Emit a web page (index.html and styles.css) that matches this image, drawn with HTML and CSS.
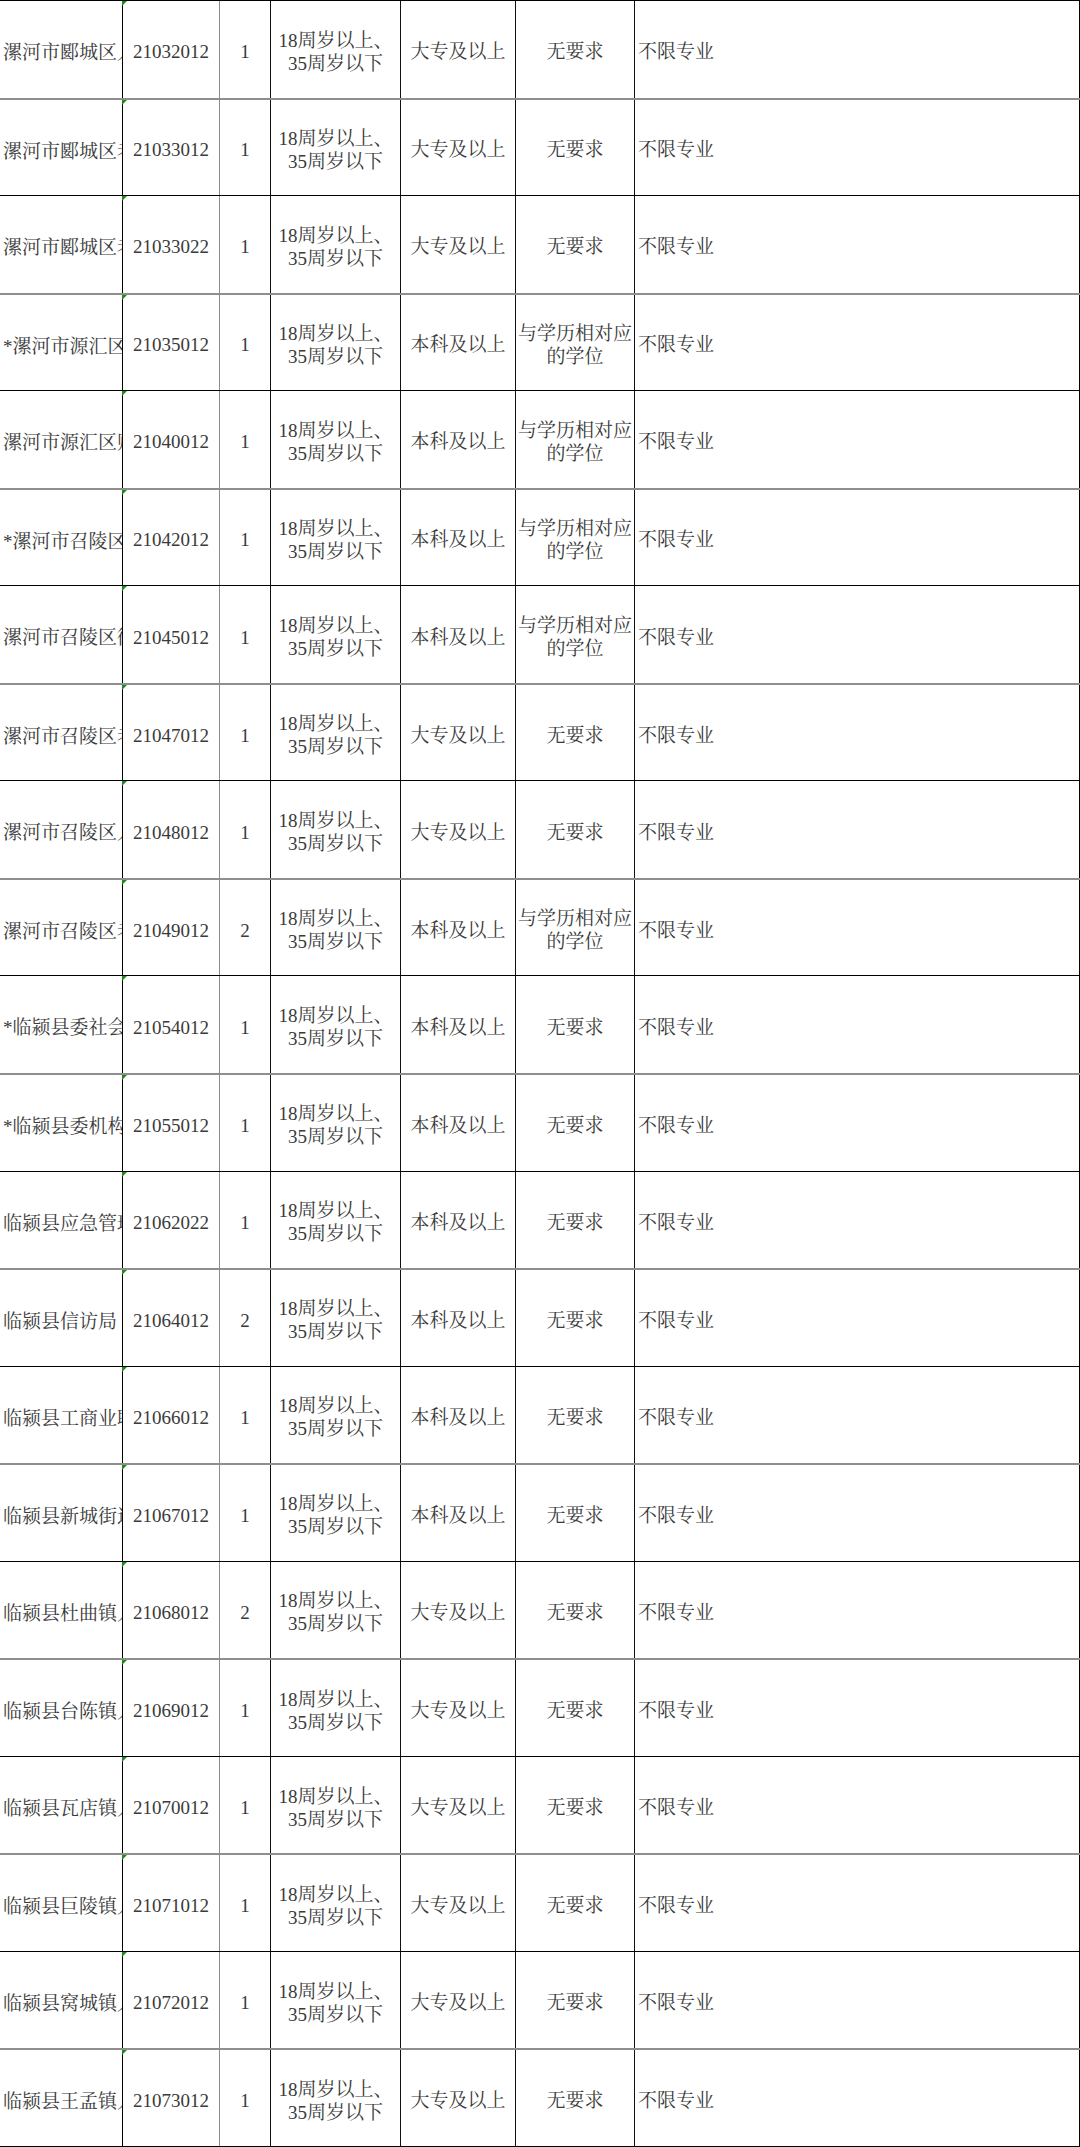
FILE: index.html
```html
<!DOCTYPE html>
<html lang="zh-CN">
<head>
<meta charset="utf-8">
<title>岗位表</title>
<link rel="stylesheet" href="styles.css">
</head>
<body>
<div class="sheet">
  <div class="row line-dark">
    <div class="c c1">漯河市郾城区人民政府</div><div class="c c2">21032012</div><div class="c c3">1</div>
    <div class="c c4">18周岁以上、<br>35周岁以下</div><div class="c c5">大专及以上</div><div class="c c6">无要求</div><div class="c c7">不限专业</div>
  </div>
  <div class="row line-gray">
    <div class="c c1">漯河市郾城区老干部局</div><div class="c c2">21033012</div><div class="c c3">1</div>
    <div class="c c4">18周岁以上、<br>35周岁以下</div><div class="c c5">大专及以上</div><div class="c c6">无要求</div><div class="c c7">不限专业</div>
  </div>
  <div class="row line-dark">
    <div class="c c1">漯河市郾城区老干部局</div><div class="c c2">21033022</div><div class="c c3">1</div>
    <div class="c c4">18周岁以上、<br>35周岁以下</div><div class="c c5">大专及以上</div><div class="c c6">无要求</div><div class="c c7">不限专业</div>
  </div>
  <div class="row line-gray">
    <div class="c c1">*漯河市源汇区委</div><div class="c c2">21035012</div><div class="c c3">1</div>
    <div class="c c4">18周岁以上、<br>35周岁以下</div><div class="c c5">本科及以上</div><div class="c c6">与学历相对应<br>的学位</div><div class="c c7">不限专业</div>
  </div>
  <div class="row line-dark">
    <div class="c c1">漯河市源汇区财政局</div><div class="c c2">21040012</div><div class="c c3">1</div>
    <div class="c c4">18周岁以上、<br>35周岁以下</div><div class="c c5">本科及以上</div><div class="c c6">与学历相对应<br>的学位</div><div class="c c7">不限专业</div>
  </div>
  <div class="row line-gray">
    <div class="c c1">*漯河市召陵区委</div><div class="c c2">21042012</div><div class="c c3">1</div>
    <div class="c c4">18周岁以上、<br>35周岁以下</div><div class="c c5">本科及以上</div><div class="c c6">与学历相对应<br>的学位</div><div class="c c7">不限专业</div>
  </div>
  <div class="row line-dark">
    <div class="c c1">漯河市召陵区街道办事处</div><div class="c c2">21045012</div><div class="c c3">1</div>
    <div class="c c4">18周岁以上、<br>35周岁以下</div><div class="c c5">本科及以上</div><div class="c c6">与学历相对应<br>的学位</div><div class="c c7">不限专业</div>
  </div>
  <div class="row line-gray">
    <div class="c c1">漯河市召陵区老干部局</div><div class="c c2">21047012</div><div class="c c3">1</div>
    <div class="c c4">18周岁以上、<br>35周岁以下</div><div class="c c5">大专及以上</div><div class="c c6">无要求</div><div class="c c7">不限专业</div>
  </div>
  <div class="row line-dark">
    <div class="c c1">漯河市召陵区人民政府</div><div class="c c2">21048012</div><div class="c c3">1</div>
    <div class="c c4">18周岁以上、<br>35周岁以下</div><div class="c c5">大专及以上</div><div class="c c6">无要求</div><div class="c c7">不限专业</div>
  </div>
  <div class="row line-gray">
    <div class="c c1">漯河市召陵区老干部局</div><div class="c c2">21049012</div><div class="c c3">2</div>
    <div class="c c4">18周岁以上、<br>35周岁以下</div><div class="c c5">本科及以上</div><div class="c c6">与学历相对应<br>的学位</div><div class="c c7">不限专业</div>
  </div>
  <div class="row line-dark">
    <div class="c c1">*临颍县委社会工作部</div><div class="c c2">21054012</div><div class="c c3">1</div>
    <div class="c c4">18周岁以上、<br>35周岁以下</div><div class="c c5">本科及以上</div><div class="c c6">无要求</div><div class="c c7">不限专业</div>
  </div>
  <div class="row line-gray">
    <div class="c c1">*临颍县委机构编制委员会</div><div class="c c2">21055012</div><div class="c c3">1</div>
    <div class="c c4">18周岁以上、<br>35周岁以下</div><div class="c c5">本科及以上</div><div class="c c6">无要求</div><div class="c c7">不限专业</div>
  </div>
  <div class="row line-dark">
    <div class="c c1">临颍县应急管理局</div><div class="c c2">21062022</div><div class="c c3">1</div>
    <div class="c c4">18周岁以上、<br>35周岁以下</div><div class="c c5">本科及以上</div><div class="c c6">无要求</div><div class="c c7">不限专业</div>
  </div>
  <div class="row line-gray">
    <div class="c c1">临颍县信访局</div><div class="c c2">21064012</div><div class="c c3">2</div>
    <div class="c c4">18周岁以上、<br>35周岁以下</div><div class="c c5">本科及以上</div><div class="c c6">无要求</div><div class="c c7">不限专业</div>
  </div>
  <div class="row line-dark">
    <div class="c c1">临颍县工商业联合会</div><div class="c c2">21066012</div><div class="c c3">1</div>
    <div class="c c4">18周岁以上、<br>35周岁以下</div><div class="c c5">本科及以上</div><div class="c c6">无要求</div><div class="c c7">不限专业</div>
  </div>
  <div class="row line-gray">
    <div class="c c1">临颍县新城街道办事处</div><div class="c c2">21067012</div><div class="c c3">1</div>
    <div class="c c4">18周岁以上、<br>35周岁以下</div><div class="c c5">本科及以上</div><div class="c c6">无要求</div><div class="c c7">不限专业</div>
  </div>
  <div class="row line-dark">
    <div class="c c1">临颍县杜曲镇人民政府</div><div class="c c2">21068012</div><div class="c c3">2</div>
    <div class="c c4">18周岁以上、<br>35周岁以下</div><div class="c c5">大专及以上</div><div class="c c6">无要求</div><div class="c c7">不限专业</div>
  </div>
  <div class="row line-gray">
    <div class="c c1">临颍县台陈镇人民政府</div><div class="c c2">21069012</div><div class="c c3">1</div>
    <div class="c c4">18周岁以上、<br>35周岁以下</div><div class="c c5">大专及以上</div><div class="c c6">无要求</div><div class="c c7">不限专业</div>
  </div>
  <div class="row line-dark">
    <div class="c c1">临颍县瓦店镇人民政府</div><div class="c c2">21070012</div><div class="c c3">1</div>
    <div class="c c4">18周岁以上、<br>35周岁以下</div><div class="c c5">大专及以上</div><div class="c c6">无要求</div><div class="c c7">不限专业</div>
  </div>
  <div class="row line-gray">
    <div class="c c1">临颍县巨陵镇人民政府</div><div class="c c2">21071012</div><div class="c c3">1</div>
    <div class="c c4">18周岁以上、<br>35周岁以下</div><div class="c c5">大专及以上</div><div class="c c6">无要求</div><div class="c c7">不限专业</div>
  </div>
  <div class="row line-dark">
    <div class="c c1">临颍县窝城镇人民政府</div><div class="c c2">21072012</div><div class="c c3">1</div>
    <div class="c c4">18周岁以上、<br>35周岁以下</div><div class="c c5">大专及以上</div><div class="c c6">无要求</div><div class="c c7">不限专业</div>
  </div>
  <div class="row line-gray">
    <div class="c c1">临颍县王孟镇人民政府</div><div class="c c2">21073012</div><div class="c c3">1</div>
    <div class="c c4">18周岁以上、<br>35周岁以下</div><div class="c c5">大专及以上</div><div class="c c6">无要求</div><div class="c c7">不限专业</div>
  </div>
</div>
</body>
</html>
```
FILE: styles.css
```css
html, body {
  margin: 0;
  padding: 0;
  background: #ffffff;
}

.sheet {
  width: 1080px;
  height: 2146px;
  display: grid;
  grid-template-rows: repeat(22, 1fr);
  border-bottom: 1px solid #000;
  font-family: "Liberation Serif", "Noto Serif CJK SC", "Noto Sans CJK SC", serif;
  font-size: 19px;
  color: #3a3a3a;
}

.row {
  display: grid;
  grid-template-columns: 123px 97px 51px 130px 115px 119px 445px;
  min-height: 0;
}

.line-dark {
  border-top: 1px solid #000;
}

.line-gray {
  border-top: 2px solid #8e8e8e;
}

.c {
  display: flex;
  flex-direction: column;
  justify-content: center;
  align-items: center;
  text-align: center;
  line-height: 23px;
  white-space: nowrap;
  overflow: hidden;
  padding-top: 5px;
  border-right: 1px solid #111;
  position: relative;
  min-width: 0;
}

.c1 {
  text-align: left;
  padding-left: 3px;
  border-right-color: #000;
  display: block;
  line-height: 97px;
  padding-top: 3px;
}

.c2 {
  border-right-color: #8c8c8c;
  overflow: visible;
}

.c2::before {
  content: "";
  position: absolute;
  left: -1px;
  top: 0;
  width: 0;
  height: 0;
  border-top: 5px solid #1e8a1e;
  border-right: 5px solid transparent;
}

.c7 {
  align-items: flex-start;
  text-align: left;
  padding-left: 3px;
  border-right-color: #000;
}
```
